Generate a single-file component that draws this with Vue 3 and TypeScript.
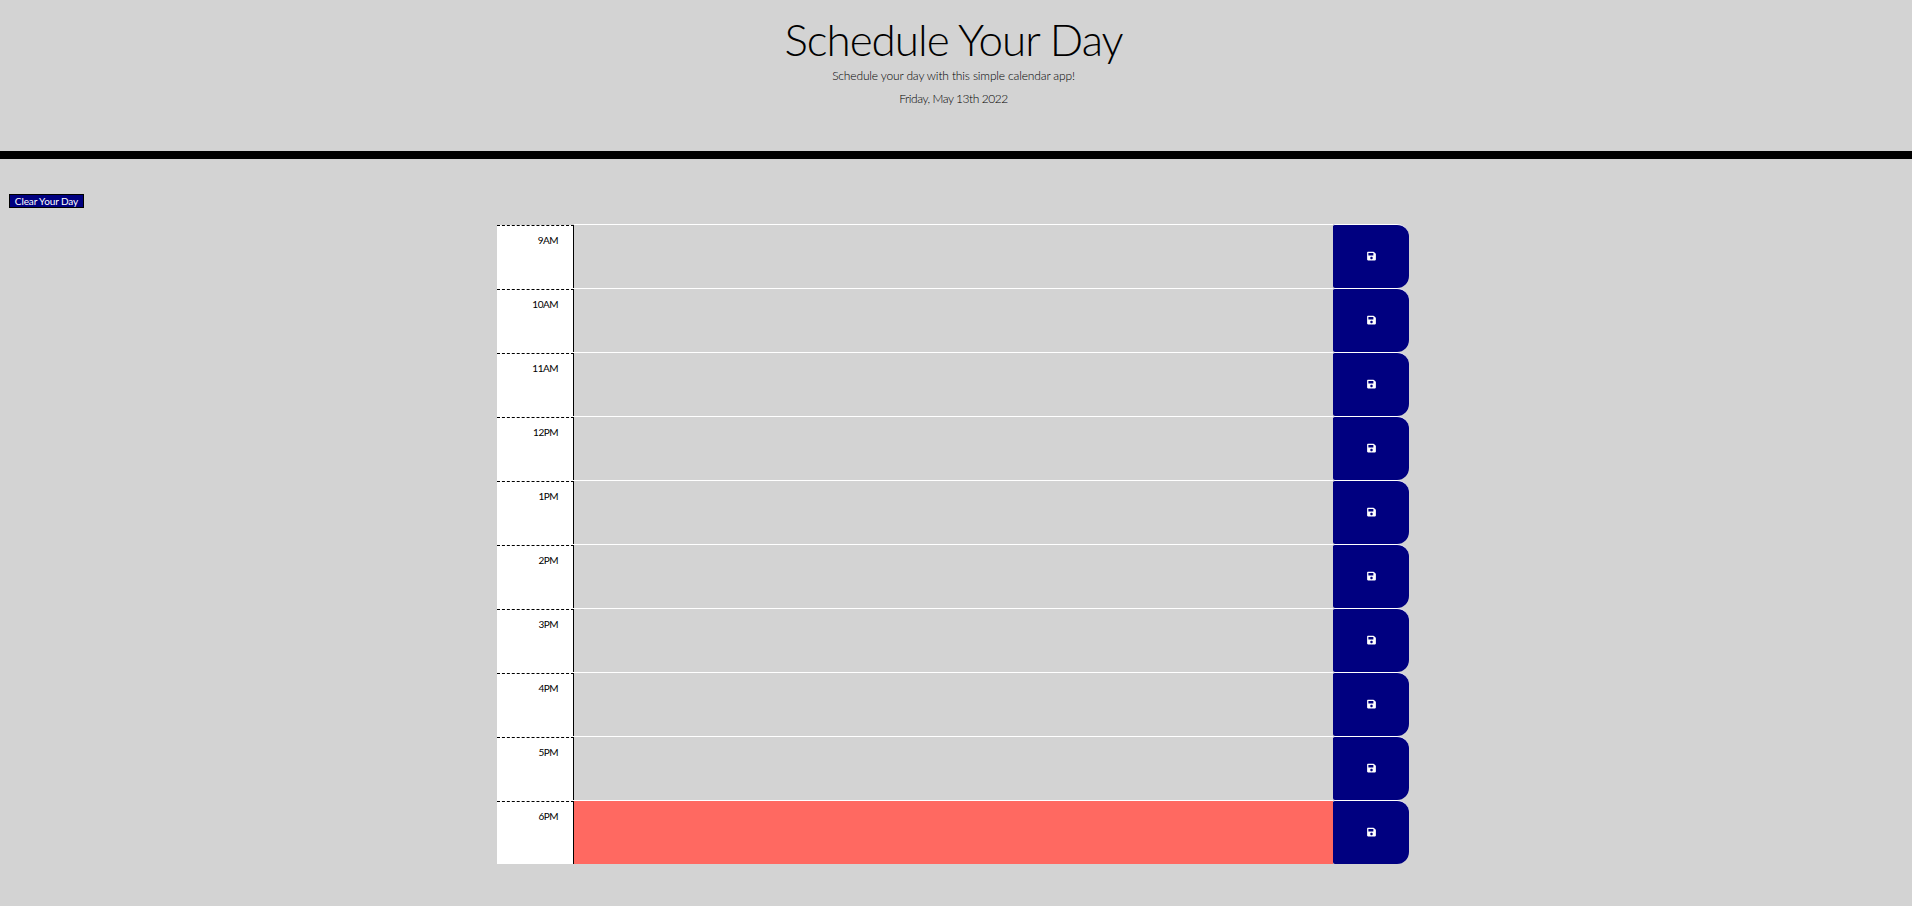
<script setup lang="ts">
const hours: string[] = ['9AM', '10AM', '11AM', '12PM', '1PM', '2PM', '3PM', '4PM', '5PM', '6PM']
const isPresent = (h: string): boolean => h === '6PM'
</script>

<template>
  <div class="page">
    <header class="jumbo">
      <h1 class="title">Schedule Your Day</h1>
      <p class="lead">Schedule your day with this simple calendar app!</p>
      <p class="date">Friday, May 13th 2022</p>
    </header>
    <button class="clear" type="button">Clear Your Day</button>
    <main class="planner">
      <div v-for="h in hours" :key="h" class="row">
        <div class="hour">{{ h }}</div>
        <div class="task" :class="{ present: isPresent(h) }"></div>
        <button class="save" type="button" :aria-label="'Save ' + h">
          <svg class="icon" viewBox="0 0 448 512" aria-hidden="true">
            <path fill="currentColor" d="M433.941 129.941l-83.882-83.882A48 48 0 0 0 316.118 32H48C21.49 32 0 53.49 0 80v352c0 26.51 21.49 48 48 48h352c26.51 0 48-21.49 48-48V163.882a48 48 0 0 0-14.059-33.941zM224 416c-35.346 0-64-28.654-64-64 0-35.346 28.654-64 64-64s64 28.654 64 64c0 35.346-28.654 64-64 64zm96-304.52V212c0 6.627-5.373 12-12 12H76c-6.627 0-12-5.373-12-12V108c0-6.627 5.373-12 12-12h228.52c3.183 0 6.235 1.264 8.485 3.515l3.48 3.48A11.996 11.996 0 0 1 320 111.48z"/>
          </svg>
        </button>
      </div>
    </main>
  </div>
</template>

<style>
html, body { margin: 0; background: #d3d3d3; }
</style>

<style scoped>
.page {
  min-height: 906px;
  background: #d3d3d3;
  font-family: Lato, "Liberation Sans", sans-serif;
  color: #000;
  overflow: hidden;
}
.jumbo {
  height: 151px;
  padding-right: 5px;
  border-bottom: 8px solid #000;
  text-align: center;
}
.title {
  margin: 0;
  padding-top: 11px;
  font-size: 44px;
  font-weight: 300;
  line-height: 56px;
  letter-spacing: -1px;
}
.lead, .date {
  margin: 0;
  font-size: 12px;
  font-weight: 300;
  line-height: 16px;
}
.lead { margin-top: 1px; letter-spacing: -0.15px; }
.date { margin-top: 7px; letter-spacing: -0.45px; }
.clear {
  display: block;
  margin: 35px 0 0 9px;
  width: 75px;
  height: 14px;
  padding: 0;
  border: 1px solid #000;
  background: #000080;
  color: #fff;
  font-family: inherit;
  font-size: 10px;
  line-height: 12px;
  letter-spacing: -0.1px;
  text-align: center;
}
.planner {
  width: 912px;
  margin: 16px 0 0 497px;
}
.row {
  display: flex;
  height: 64px;
}
.hour {
  width: 77px;
  height: 63px;
  box-sizing: border-box;
  margin-top: 1px;
  background: #fff;
  border-top: 1px dashed #000;
  border-right: 1px solid #000;
  padding: 7px 15px 0 0;
  text-align: right;
  font-size: 10px;
  font-weight: 400;
  line-height: 15px;
  letter-spacing: -0.5px;
}
.row + .row .hour { box-shadow: 0 -1px 0 #fff; }
.task {
  width: 759px;
  box-sizing: border-box;
  border-top: 1px solid #fff;
  background: #d3d3d3;
}
.task.present { background: #ff6961; }
.save {
  width: 76px;
  padding: 0 0 2px;
  border: 0;
  border-top: 1px solid #fff;
  background: #000080;
  color: #fff;
  border-radius: 2px 12px 12px 2px;
  display: flex;
  align-items: center;
  justify-content: center;
}
.icon { width: 9px; height: 10px; display: block; }
</style>
